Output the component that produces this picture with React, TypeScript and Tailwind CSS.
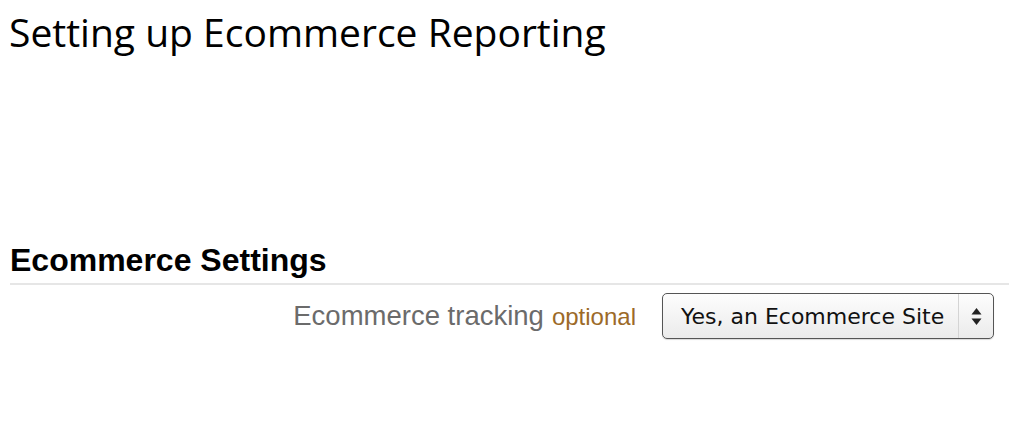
import React from 'react';

const SelectArrows: React.FC = () => (
  <svg width="11" height="19" viewBox="0 0 11 19" className="text-[#222]">
    <path d="M5.5 1 L10.5 7.5 H0.5 Z" fill="currentColor" />
    <path d="M5.5 18 L10.5 11.5 H0.5 Z" fill="currentColor" />
  </svg>
);

const App: React.FC = () => {
  return (
    <div className="w-[1019px] h-[421px] bg-white overflow-hidden">
      <h1 className="pl-[9px] pt-[8px] text-[39px] leading-[48px] font-medium text-black font-['Open_Sans',sans-serif]">
        Setting up Ecommerce Reporting
      </h1>

      <div className="mt-[186px] px-[10px]">
        <h2 className="text-[32px] leading-[36px] font-bold text-black font-['Liberation_Sans',Arial,sans-serif]">
          Ecommerce Settings
        </h2>
        <div className="mt-[5px] h-[2px] w-[999px] bg-[#e6e6e6]" />

        <div className="mt-[8px] flex items-center">
          <div className="w-[626px] text-right font-['Liberation_Sans',Arial,sans-serif]">
            <span className="text-[27.5px] text-[#6b6b6b]">Ecommerce tracking</span>
            <span className="ml-[8px] text-[24px] text-[#9c6a28]">optional</span>
          </div>
          <div className="ml-[26px] flex h-[46px] w-[332px] items-stretch rounded-[5px] border border-[#555] bg-gradient-to-b from-[#fdfdfd] to-[#ebebeb] shadow-[0_1px_1px_rgba(0,0,0,0.15)]">
            <div className="flex flex-1 items-center pl-[18px] text-[22px] text-[#111] font-['DejaVu_Sans',Verdana,sans-serif]">
              Yes, an Ecommerce Site
            </div>
            <div className="flex w-[35px] items-center justify-center border-l border-[#d4d4d4]">
              <SelectArrows />
            </div>
          </div>
        </div>
      </div>
    </div>
  );
};

export default App;
